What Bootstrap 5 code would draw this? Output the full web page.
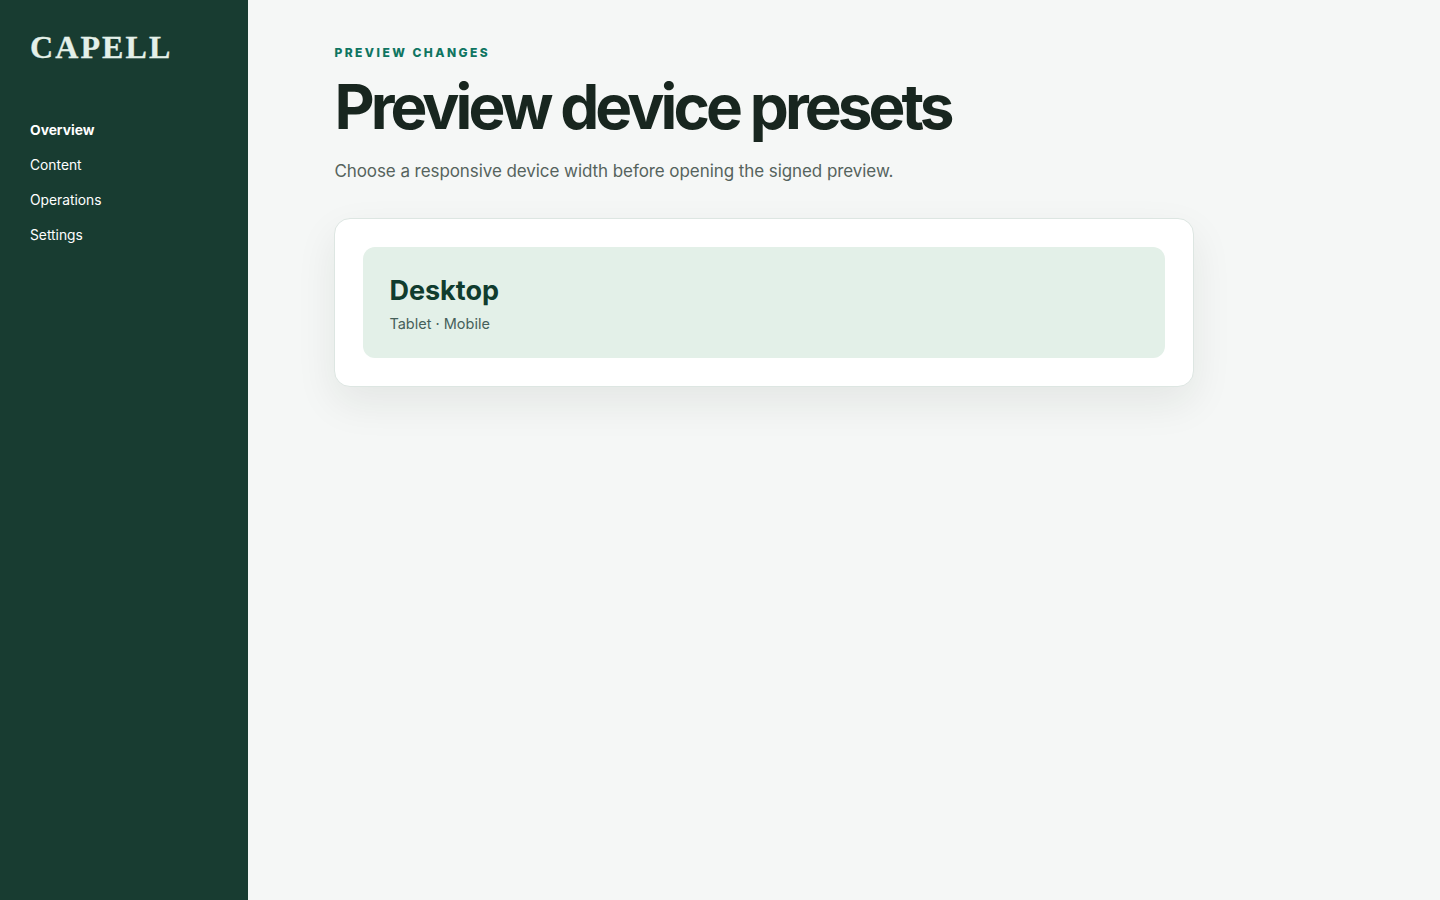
<!DOCTYPE html>
<html lang="en">
<head>
<meta charset="utf-8">
<title>Preview device presets</title>
<link href="https://cdn.jsdelivr.net/npm/bootstrap@5.3.0/dist/css/bootstrap.min.css" rel="stylesheet">
<style>
body{background:#f5f7f6;font-family:Inter,"Liberation Sans",sans-serif;min-height:900px}
.side-rail{width:248px;background:#183c31;padding:29px 30px 30px;min-height:900px;flex:none}
.brand-word{font-family:"Liberation Serif",serif;font-weight:700;font-size:32px;line-height:36px;letter-spacing:2.1px;color:#e4f0e9;margin-bottom:48px;-webkit-text-stroke:.3px #e4f0e9}
.rail-link{display:block;color:#fff;font-size:13.8px;line-height:21px;padding:7px 0;text-decoration:none}
.rail-link.is-active{font-weight:700}
.main-pane{padding:44px 0 0 86.4px;width:946px}
.eyebrow-text{color:#0f7561;font-size:12px;font-weight:800;letter-spacing:2.45px;line-height:18px;margin:0}
.page-title{font-size:62px;font-weight:700;letter-spacing:-3.92px;line-height:70px;color:#18261f;margin:10px 0 0}
.page-sub{font-size:17px;letter-spacing:-.07px;line-height:27px;color:#55635d;margin:16px 0 0}
.preset-shell{margin-top:33px;background:#fff;border:1px solid #dde6e2;border-radius:16px;padding:28px;box-shadow:0 16px 40px rgba(24,38,31,.08)}
.preset-active{background:#e3f0e8;border-radius:12px;padding:27px 26px 22px;height:111px}
.preset-name{font-size:27px;line-height:34px;font-weight:700;color:#103c2e;margin:0}
.preset-others{font-size:14.5px;line-height:22px;color:#46605a;margin:5px 0 0}
</style>
</head>
<body>
<div class="d-flex">
<aside class="side-rail">
<div class="brand-word">CAPELL</div>
<nav>
<a class="rail-link is-active" href="#">Overview</a>
<a class="rail-link" href="#">Content</a>
<a class="rail-link" href="#">Operations</a>
<a class="rail-link" href="#">Settings</a>
</nav>
</aside>
<main class="main-pane">
<p class="eyebrow-text text-uppercase">Preview changes</p>
<h1 class="page-title">Preview device presets</h1>
<p class="page-sub">Choose a responsive device width before opening the signed preview.</p>
<div class="preset-shell">
<div class="preset-active">
<h2 class="preset-name">Desktop</h2>
<p class="preset-others">Tablet · Mobile</p>
</div>
</div>
</main>
</div>
<script src="https://cdn.jsdelivr.net/npm/bootstrap@5.3.0/dist/js/bootstrap.bundle.min.js"></script>
</body>
</html>
